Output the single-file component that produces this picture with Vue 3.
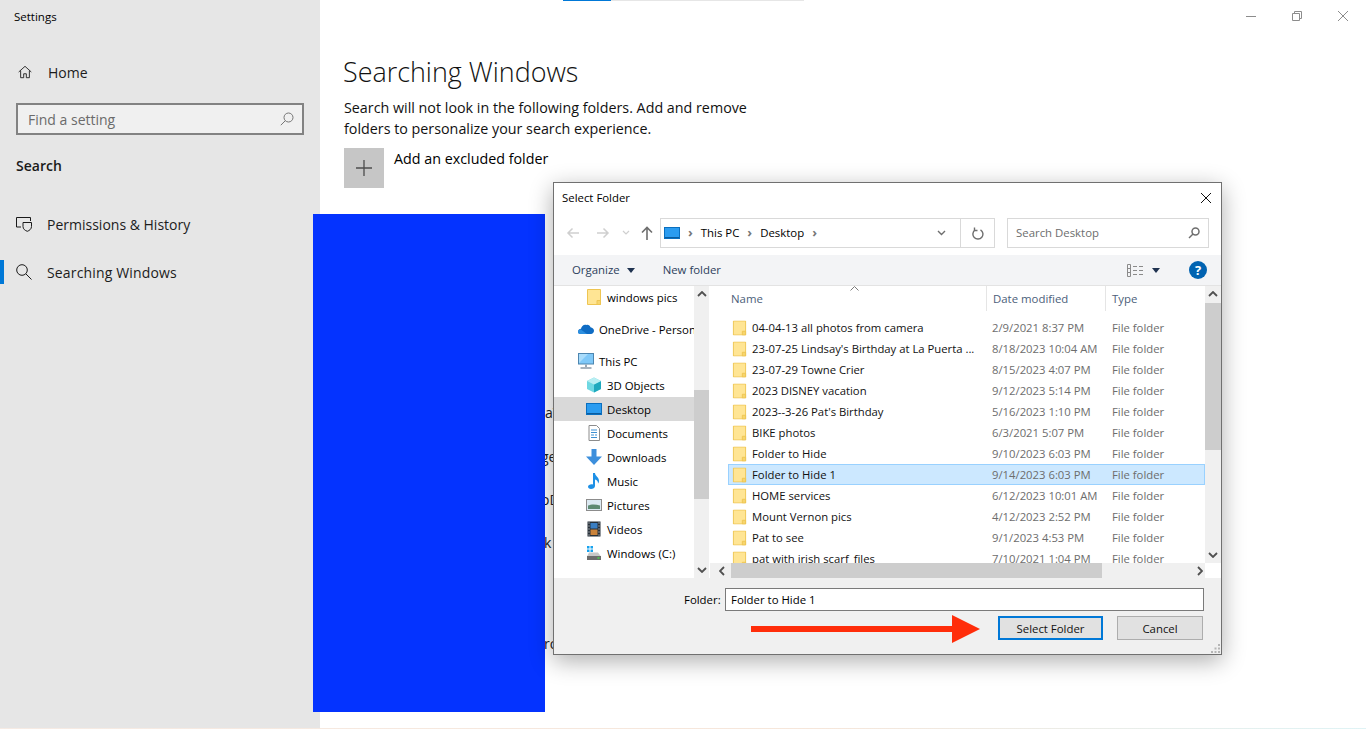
<script setup>
const navItems = [
  { label: 'windows pics', icon: 'folder', indent: true },
  { label: 'OneDrive - Personal', icon: 'cloud', gapTop: 8 },
  { label: 'This PC', icon: 'pc', gapTop: 8 },
  { label: '3D Objects', icon: 'cube', indent: true },
  { label: 'Desktop', icon: 'desktop', indent: true, active: true },
  { label: 'Documents', icon: 'docs', indent: true },
  { label: 'Downloads', icon: 'down', indent: true },
  { label: 'Music', icon: 'music', indent: true },
  { label: 'Pictures', icon: 'pics', indent: true },
  { label: 'Videos', icon: 'video', indent: true },
  { label: 'Windows (C:)', icon: 'drive', indent: true },
]

const files = [
  { name: '04-04-13 all photos from camera', date: '2/9/2021 8:37 PM' },
  { name: "23-07-25 Lindsay's Birthday at La Puerta ...", date: '8/18/2023 10:04 AM' },
  { name: '23-07-29 Towne Crier', date: '8/15/2023 4:07 PM' },
  { name: '2023 DISNEY vacation', date: '9/12/2023 5:14 PM' },
  { name: "2023--3-26 Pat's Birthday", date: '5/16/2023 1:10 PM' },
  { name: 'BIKE photos', date: '6/3/2021 5:07 PM' },
  { name: 'Folder to Hide', date: '9/10/2023 6:03 PM' },
  { name: 'Folder to Hide 1', date: '9/14/2023 6:03 PM', selected: true },
  { name: 'HOME services', date: '6/12/2023 10:01 AM' },
  { name: 'Mount Vernon pics', date: '4/12/2023 2:52 PM' },
  { name: 'Pat to see', date: '9/1/2023 4:53 PM' },
  { name: 'pat with irish scarf_files', date: '7/10/2021 1:04 PM' },
]

// bits of the excluded folder list that stick out between the blue box and the dialog
const hiddenRows = [
  { text: 'a\\', top: 403, left: 545 },
  { text: 'ge', top: 447, left: 541 },
  { text: 'oD', top: 490, left: 541 },
  { text: 'k', top: 533, left: 544 },
  { text: 'ro', top: 634, left: 544 },
]
</script>

<template>
  <div class="screen">
    <svg class="defs" width="0" height="0">
      <symbol id="folder" viewBox="0 0 16 16">
        <path d="M1.500 .5h13v15h-13z" fill="#ffe594" stroke="#eec552" />
        <path d="M11 15.500v-4h3.500v4z" fill="#f6d56e" stroke="#eec552" />
      </symbol>
    </svg>

    <aside class="sidebar">
      <div class="app-title">Settings</div>
      <div class="side-link home">
        <svg class="side-icon" viewBox="0 0 16 16" fill="none" stroke="#1a1a1a"><path d="M.8 8 8 1.500 15.200 8M3 6.500v8h3.500V10h3v4.500H13v-8" /></svg>
        <span>Home</span>
      </div>
      <div class="find">
        <span>Find a setting</span>
        <svg width="14" height="14" viewBox="0 0 14 14" fill="none" stroke="#767676"><circle cx="8.500" cy="5.500" r="4.500" /><path d="M5.300 8.700.8 13.200" /></svg>
      </div>
      <div class="side-head">Search</div>
      <div class="side-link perm">
        <svg class="side-icon wide" viewBox="0 0 16 16" fill="none" stroke="#1a1a1a"><path d="M5 11H.5V1.500h14V5" /><path d="M7 6.500h8.500v4c0 2.500-2 4-4.200 4.800C9 14.500 7 13 7 10.500z" /></svg>
        <span>Permissions &amp; History</span>
      </div>
      <div class="side-link current">
        <svg class="side-icon wide" viewBox="0 0 16 16" fill="none" stroke="#1a1a1a"><circle cx="6" cy="6" r="5.300" /><path d="m9.800 9.800 5.700 5.700" /></svg>
        <span>Searching Windows</span>
      </div>
    </aside>

    <main class="content">
      <div class="loader"><i></i></div>
      <div class="win-controls">
        <svg width="12" height="12" viewBox="0 0 12 12" fill="none" stroke="#8c8c8c"><path d="M1 6.500h10" /></svg>
        <svg width="12" height="12" viewBox="0 0 12 12" fill="none" stroke="#8c8c8c"><path d="M1.500 3.500h7v7h-7zM3.500 3.500v-2h7v7h-2" /></svg>
        <svg width="12" height="12" viewBox="0 0 12 12" fill="none" stroke="#8c8c8c"><path d="m1 1 10 10M11 1 1 11" /></svg>
      </div>
      <h1>Searching Windows</h1>
      <p class="intro">Search will not look in the following folders. Add and remove folders to personalize your search experience.</p>
      <div class="add-row">
        <div class="add-tile">
          <svg width="16" height="16" viewBox="0 0 16 16" stroke="#4d4d4d" stroke-width="1.300"><path d="M8 0v16M0 8h16" /></svg>
        </div>
        <span>Add an excluded folder</span>
      </div>
    </main>

    <div v-for="r in hiddenRows" :key="r.top" class="hidden-row" :style="{ top: r.top + 'px', left: r.left + 'px' }">{{ r.text }}</div>

    <div class="blue-box"></div>

    <section class="dialog">
      <header class="dlg-title">
        <span>Select Folder</span>
        <svg width="12" height="12" viewBox="0 0 12 12" fill="none" stroke="#111"><path d="m1 1 10 10M11 1 1 11" /></svg>
      </header>

      <div class="address-row">
        <div class="nav-btns">
          <svg width="14" height="12" viewBox="0 0 14 12" fill="none" stroke="#cfcfcf" stroke-width="1.500"><path d="M13 6H2M6.500 1.500 2 6l4.500 4.500" /></svg>
          <svg width="14" height="12" viewBox="0 0 14 12" fill="none" stroke="#cfcfcf" stroke-width="1.500"><path d="M1 6h11M7.500 1.500 12 6l-4.500 4.500" /></svg>
          <svg width="8" height="6" viewBox="0 0 8 6" fill="none" stroke="#cfcfcf" stroke-width="1.200"><path d="m1 1 3 3 3-3" /></svg>
          <svg width="12" height="14" viewBox="0 0 12 14" fill="none" stroke="#6e6e6e" stroke-width="1.600"><path d="M6 14V2M1 6.500 6 1.500l5 5" /></svg>
        </div>
        <div class="address">
          <svg width="16" height="12" viewBox="0 0 16 12"><rect x=".5" y=".5" width="15" height="11" fill="#2b9cf0" stroke="#0a6fbf" /><path d="M1 10.500h14" stroke="#0b5c9e" /></svg>
          <b class="crumb-sep">›</b><span>This PC</span><b class="crumb-sep">›</b><span>Desktop</span><b class="crumb-sep">›</b>
          <svg class="addr-drop" width="9" height="6" viewBox="0 0 9 6" fill="none" stroke="#6e6e6e" stroke-width="1.400"><path d="m1 1 3.500 3.500L8 1" /></svg>
          <div class="refresh">
            <svg width="12" height="13" viewBox="0 0 12 13" fill="none" stroke="#6e6e6e" stroke-width="1.400"><path d="M8.500 2.800A5 5 0 1 1 3 3" /><path d="M2.500 .5V3.500h3" /></svg>
          </div>
        </div>
        <div class="search-box">
          <span>Search Desktop</span>
          <svg width="12" height="12" viewBox="0 0 12 12" fill="none" stroke="#6e6e6e" stroke-width="1.500"><circle cx="7.500" cy="4.500" r="3.500" /><path d="M5 7 1 11" /></svg>
        </div>
      </div>

      <div class="toolbar">
        <span class="organize">Organize</span>
        <i class="caret"></i>
        <span class="new-folder">New folder</span>
        <svg class="view-icon" width="17" height="13" viewBox="0 0 17 13" fill="none" stroke="#8a8a8a"><path d="M.5.500h3v12h-3zM.5 4.500h3M.5 8.500h3M6 2.500h4M12 2.500h4M6 6.500h4M12 6.500h4M6 10.500h4M12 10.500h4" /></svg>
        <i class="caret view-caret"></i>
        <span class="help">?</span>
      </div>

      <div class="dlg-body">
        <div class="nav-pane">
          <ul class="nav-list">
            <li
              v-for="n in navItems"
              :key="n.label"
              :class="{ indent: n.indent, active: n.active, spaced: n.gapTop }"
            >
              <svg class="nav-icon" viewBox="0 0 16 16">
                <use v-if="n.icon === 'folder'" href="#folder" />
                <template v-else-if="n.icon === 'cloud'">
                  <path d="M0 11c0-2 1.500-3.200 3-3.200C3.500 5 6 3 8.500 4c1.500-.6 3.500.3 4 2.200 2 .2 3.500 1.800 3.500 3.600 0 2-1.500 3.200-3 3.200H2.500C1 13 0 12.300 0 11z" fill="#0f6cc4" />
                  <path d="M0 11c0-1.500 1-2.500 2.500-2.800L9 13H2.500C1 13 0 12.300 0 11z" fill="#2c8fe0" />
                </template>
                <template v-else-if="n.icon === 'pc'">
                  <rect x=".5" y=".5" width="15" height="10.500" fill="#7fc8f8" stroke="#4d86b0" />
                  <path d="M1 1h9L1 10z" fill="#a9dcfb" />
                  <path d="M8 11.500v2.500" stroke="#9aa8b5" stroke-width="2" />
                  <path d="M2.500 15h11" stroke="#8a9aa8" stroke-width="1.500" />
                </template>
                <template v-else-if="n.icon === 'cube'">
                  <path d="M8 .5 15 4v8l-7 3.500L1 12V4z" fill="#6fd8e2" />
                  <path d="M8 7.500 15 4v8l-7 3.500z" fill="#1fa9bd" />
                  <path d="M8 7.500 1 4l7-3.500L15 4z" fill="#b8eef2" />
                </template>
                <template v-else-if="n.icon === 'desktop'">
                  <rect x=".5" y="2.500" width="15" height="11" fill="#2b9cf0" stroke="#0a6fbf" />
                  <path d="M1 12.500h14" stroke="#0b5c9e" />
                </template>
                <template v-else-if="n.icon === 'docs'">
                  <path d="M3 .5h7.500L13.500 3.500v12H3z" fill="#fff" stroke="#8c8c8c" />
                  <path d="M5 5h6M5 7.500h6M5 10h3M9 10h2M5 12.500h6" stroke="#3d8fd1" />
                </template>
                <template v-else-if="n.icon === 'down'">
                  <path d="M5.500 0h5v7.500H16L8 16 0 7.500h5.500z" fill="#3d8fdc" />
                </template>
                <template v-else-if="n.icon === 'music'">
                  <path d="M7 0h2c0 3 4 4 4 8 0 1-.4 2-1 2.500.2-2-1-3.500-3-4v6.500C9 15 7 16 5 16c-2 0-3-1-3-2.200C2 12 4.500 11 7 11.500z" fill="#1e90e6" />
                </template>
                <template v-else-if="n.icon === 'pics'">
                  <rect x=".5" y="2.500" width="15" height="11" fill="#dbe9f2" stroke="#8c8c8c" />
                  <path d="M2 8.500c3-1.500 8-1.500 12 0V12H2z" fill="#5d8a72" />
                </template>
                <template v-else-if="n.icon === 'video'">
                  <rect x="1.500" y=".5" width="13" height="15" fill="#27313a" />
                  <path d="M4.500 2h7v5.500h-7z" fill="#3a7ec2" />
                  <path d="M4.500 8.500h7V14h-7z" fill="#c9823a" />
                  <path d="M2.500 2h1M2.500 5h1M2.500 8h1M2.500 11h1M2.500 14h1M12.500 2h1M12.500 5h1M12.500 8h1M12.500 11h1M12.500 14h1" stroke="#e8e8e8" />
                </template>
                <template v-else-if="n.icon === 'drive'">
                  <path d="M1 1h2.500v2.500H1zM4.500 1H7v2.500H4.500zM1 4.500h2.500V7H1zM4.500 4.500H7V7H4.500z" fill="#17a2ee" />
                  <path d="M3 7.500h9l3 4H1z" fill="#c8c8c8" />
                  <rect x="1" y="11" width="14" height="4" fill="#6d6d6d" />
                  <path d="M11.500 13h2" stroke="#46d846" stroke-width="1.500" />
                </template>
              </svg>
              <span>{{ n.label }}</span>
            </li>
          </ul>
          <div class="scroll-v nav-scroll">
            <svg width="10" height="6" viewBox="0 0 10 6" fill="none" stroke="#505050" stroke-width="1.800"><path d="m1 5 4-4 4 4" /></svg>
            <div class="thumb-space"><div class="thumb"></div></div>
            <svg width="10" height="6" viewBox="0 0 10 6" fill="none" stroke="#505050" stroke-width="1.800"><path d="m1 1 4 4 4-4" /></svg>
          </div>
        </div>

        <div class="list-pane">
          <div class="list-main">
            <div class="list-area">
              <div class="col-head">
                <span class="c-name">Name
                  <svg class="sort" width="9" height="5" viewBox="0 0 9 5" fill="none" stroke="#7a7a7a"><path d="m.5 4.500 4-4 4 4" /></svg>
                </span>
                <span class="c-date">Date modified</span>
                <span class="c-type">Type</span>
              </div>
              <div class="rows">
                <div v-for="f in files" :key="f.name" class="row" :class="{ selected: f.selected }">
                  <svg class="row-icon" viewBox="0 0 16 16"><use href="#folder" /></svg>
                  <span class="r-name">{{ f.name }}</span>
                  <span class="r-date">{{ f.date }}</span>
                  <span class="r-type">File folder</span>
                </div>
              </div>
            </div>
            <div class="scroll-v list-scroll">
              <svg width="10" height="6" viewBox="0 0 10 6" fill="none" stroke="#505050" stroke-width="1.800"><path d="m1 5 4-4 4 4" /></svg>
              <div class="thumb-space"><div class="thumb"></div></div>
              <svg width="10" height="6" viewBox="0 0 10 6" fill="none" stroke="#505050" stroke-width="1.800"><path d="m1 1 4 4 4-4" /></svg>
            </div>
          </div>
          <div class="scroll-h">
            <svg width="6" height="10" viewBox="0 0 6 10" fill="none" stroke="#505050" stroke-width="1.800"><path d="M5 1 1 5l4 4" /></svg>
            <div class="h-track"><div class="h-thumb"></div></div>
            <svg width="6" height="10" viewBox="0 0 6 10" fill="none" stroke="#505050" stroke-width="1.800"><path d="m1 1 4 4-4 4" /></svg>
            <div class="corner"></div>
          </div>
        </div>
      </div>

      <footer class="dlg-foot">
        <div class="folder-line">
          <label>Folder:</label>
          <div class="folder-input">Folder to Hide 1</div>
        </div>
        <div class="btn-line">
          <button class="primary">Select Folder</button>
          <button class="cancel">Cancel</button>
        </div>
        <svg class="grip" width="9" height="9" viewBox="0 0 9 9" fill="#b5b5b5"><path d="M7 0h2v2H7zM3.500 3.500h2v2h-2zM7 3.500h2v2H7zM0 7h2v2H0zM3.500 7h2v2h-2zM7 7h2v2H7z" /></svg>
      </footer>
    </section>

    <svg class="red-arrow" width="230" height="30" viewBox="0 0 230 30">
      <path d="M0 12h201V1l28 14-28 14V18H0z" fill="#ff2d0a" />
    </svg>

    <div class="edge-line"></div>
  </div>
</template>

<style>
body {
  margin: 0;
  background: #fff;
}
</style>

<style scoped>
.screen {
  position: relative;
  display: flex;
  width: 1366px;
  height: 729px;
  overflow: hidden;
  background: #fff;
  color: #000;
  font-family: "Open Sans", "Noto Sans", sans-serif;
}
.defs {
  position: absolute;
}

/* sidebar */
.sidebar {
  width: 320px;
  flex: none;
  display: flex;
  flex-direction: column;
  background: #e6e6e6;
  font-size: 14px;
}
.app-title {
  padding: 8px 0 0 14px;
  height: 17px;
  font-size: 11.500px;
  line-height: 17px;
}
.side-link {
  position: relative;
  display: flex;
  align-items: center;
  height: 24px;
  padding-left: 18px;
  gap: 16px;
  color: #1c1c1c;
}
.side-icon {
  width: 14px;
  height: 14px;
  flex: none;
}
.side-icon.wide {
  width: 16px;
  height: 16px;
}
.perm,
.current {
  gap: 15px;
}
.home {
  margin-top: 35px;
}
.find {
  display: flex;
  align-items: center;
  justify-content: space-between;
  margin: 19px 16px 0;
  height: 28px;
  padding: 0 8px 0 10px;
  border: 2px solid #828282;
  background: #f0f0f0;
  color: #6b6b6b;
}
.side-head {
  margin: 19px 0 0 16px;
  height: 24px;
  line-height: 24px;
  font-weight: 600;
  color: #1a1a1a;
}
.perm {
  margin-top: 34px;
  padding-left: 16px;
}
.current {
  margin-top: 24px;
  padding-left: 16px;
  letter-spacing: 0.15px;
}
.current::before {
  content: "";
  position: absolute;
  left: 0;
  top: 0;
  width: 4px;
  height: 24px;
  background: #0078d7;
}

/* main page */
.content {
  position: relative;
  flex: 1;
  padding: 52px 0 0 23px;
}
.loader {
  position: absolute;
  left: 243px;
  top: 0;
  width: 241px;
  height: 1px;
  background: #e6e6e6;
}
.loader i {
  display: block;
  width: 48px;
  height: 1px;
  background: #0078d7;
}
.win-controls {
  position: absolute;
  right: 17px;
  top: 10px;
  display: flex;
  gap: 34px;
}
h1 {
  margin: 0;
  font-size: 26.900px;
  font-weight: 300;
  line-height: 40px;
  color: #111;
}
.intro {
  margin: 5px 0 0 1px;
  width: 430px;
  font-size: 14.300px;
  line-height: 21px;
  color: #111;
}
.add-row {
  display: flex;
  gap: 10px;
  margin: 9px 0 0 1px;
  font-size: 14.300px;
  line-height: 20px;
}
.add-row span {
  padding-top: 1px;
}
.add-tile {
  width: 40px;
  height: 40px;
  display: flex;
  align-items: center;
  justify-content: center;
  background: #c6c6c6;
}
.hidden-row {
  position: absolute;
  white-space: nowrap;
  font-size: 14px;
  line-height: 20px;
  color: #222;
}
.blue-box {
  position: absolute;
  left: 313px;
  top: 214px;
  width: 232px;
  height: 498px;
  background: #0433ff;
}
.edge-line {
  position: absolute;
  left: 0;
  right: 0;
  bottom: 0;
  height: 1px;
  background: linear-gradient(90deg, #f6ebe4, #f6e6da 60%, #dff3f5);
}

/* dialog */
.dialog {
  position: absolute;
  left: 553px;
  top: 182px;
  width: 667px;
  height: 471px;
  display: flex;
  flex-direction: column;
  border: 1px solid #707070;
  background: #fff;
  box-shadow: 0 6px 22px rgba(0, 0, 0, 0.32);
  font-size: 11.400px;
}
.dlg-title {
  height: 29px;
  flex: none;
  display: flex;
  align-items: center;
  justify-content: space-between;
  padding: 0 9px 0 8px;
}
.address-row {
  display: flex;
  margin-top: 6px;
  height: 30px;
  flex: none;
}
.nav-btns {
  width: 106px;
  flex: none;
  display: flex;
  align-items: center;
  padding-left: 12px;
  box-sizing: border-box;
}
.nav-btns svg:nth-child(1) {
  margin-right: 16px;
}
.nav-btns svg:nth-child(2) {
  margin-right: 12px;
}
.nav-btns svg:nth-child(3) {
  margin-right: 11px;
}
.address {
  width: 335px;
  box-sizing: border-box;
  flex: none;
  display: flex;
  align-items: center;
  border: 1px solid #d9d9d9;
  padding-left: 3px;
}
.address span,
.search-box span {
  margin-bottom: 2px;
}
.crumb-sep {
  margin: 0 8px 2px 8px;
  color: #777;
  font-size: 13px;
  font-weight: 700;
  line-height: 1;
}
.addr-drop {
  margin-left: auto;
  margin-right: 14px;
}
.refresh {
  width: 33px;
  height: 100%;
  display: flex;
  align-items: center;
  justify-content: center;
  border-left: 1px solid #d9d9d9;
}
.search-box {
  margin-left: 12px;
  width: 202px;
  box-sizing: border-box;
  display: flex;
  align-items: center;
  justify-content: space-between;
  padding: 0 8px;
  border: 1px solid #d9d9d9;
  color: #6d6d6d;
}
.toolbar {
  display: flex;
  align-items: center;
  margin-top: 7px;
  height: 31px;
  flex: none;
  padding-left: 18px;
  background: #f3f4f6;
  border-bottom: 1px solid #e3e3e3;
  box-sizing: border-box;
  color: #2d3f5c;
}
.organize,
.new-folder {
  margin-bottom: 2px;
}
.caret {
  width: 0;
  height: 0;
  margin-left: 7px;
  border-left: 4.500px solid transparent;
  border-right: 4.500px solid transparent;
  border-top: 5px solid #1f3250;
}
.new-folder {
  margin-left: 28px;
}
.view-icon {
  margin-left: auto;
}
.view-caret {
  margin-left: 8px;
}
.help {
  margin: 0 14px 0 29px;
  width: 18px;
  height: 18px;
  border-radius: 50%;
  background: #0063b1;
  color: #fff;
  font-size: 13px;
  font-weight: 700;
  line-height: 18px;
  text-align: center;
}

.dlg-body {
  display: flex;
  height: 292px;
  flex: none;
}
.nav-pane {
  width: 156px;
  flex: none;
  display: flex;
  overflow: hidden;
}
.nav-list {
  list-style: none;
  margin: -1px 0 0;
  padding: 0;
  width: 140px;
  flex: none;
}
.nav-list li {
  display: flex;
  align-items: center;
  gap: 5px;
  height: 24px;
  padding-left: 24px;
  white-space: nowrap;
  overflow: hidden;
}
.nav-list li.indent {
  padding-left: 32px;
}
.nav-list li.spaced {
  margin-top: 8px;
}
.nav-list li.active {
  background: #d9d9d9;
}
.nav-icon {
  width: 16px;
  height: 16px;
  flex: none;
}
.scroll-v {
  width: 15px;
  flex: none;
  display: flex;
  flex-direction: column;
  align-items: center;
  justify-content: space-between;
  padding: 5px 0;
  box-sizing: border-box;
  background: #f0f0f0;
}
.thumb-space {
  flex: 1;
  width: 100%;
  position: relative;
}
.thumb {
  position: absolute;
  left: 0;
  right: 0;
  background: #cdcdcd;
}
.nav-scroll .thumb {
  top: 93px;
  height: 109px;
}
.list-pane {
  flex: 1;
  min-width: 0;
  display: flex;
  flex-direction: column;
}
.list-main {
  flex: 1;
  min-height: 0;
  display: flex;
}
.list-area {
  flex: 1;
  min-width: 0;
  overflow: hidden;
}
.list-scroll .thumb {
  top: 6px;
  height: 147px;
}
.list-scroll {
  width: 16px;
}
.col-head {
  display: flex;
  height: 25px;
  color: #4c607a;
  align-items: center;
}
.col-head span {
  position: relative;
  height: 100%;
  display: flex;
  align-items: center;
  box-sizing: border-box;
}
.c-name {
  width: 276px;
  padding-left: 21px;
}
.sort {
  position: absolute;
  left: 140px;
  top: 0;
}
.c-date {
  width: 119px;
  padding-left: 6px;
  border-left: 1px solid #e5e5e5;
}
.c-type {
  flex: 1;
  padding-left: 6px;
  border-left: 1px solid #e5e5e5;
}
.rows {
  padding: 6px 0 0 18px;
  font-size: 11.300px;
}
.row {
  display: flex;
  align-items: center;
  height: 21px;
  box-sizing: border-box;
  border: 1px solid transparent;
  white-space: nowrap;
}
.row.selected {
  background: #cce8ff;
  border-color: #99d1ff;
}
.row-icon {
  width: 15px;
  height: 16px;
  flex: none;
  margin-left: 3px;
}
.r-name {
  width: 240px;
  margin-left: 5px;
  color: #111;
}
.r-date {
  width: 120px;
  color: #6d6d6d;
}
.r-type {
  color: #6d6d6d;
}
.scroll-h {
  display: flex;
  align-items: center;
  height: 15px;
  flex: none;
  background: #f0f0f0;
  padding-left: 9px;
}
.h-track {
  width: 461px;
  height: 100%;
  margin: 0 5px 0 6px;
}
.h-thumb {
  width: 371px;
  height: 100%;
  background: #cdcdcd;
}
.corner {
  width: 16px;
  height: 100%;
  margin-left: auto;
  background: #fff;
}

.dlg-foot {
  position: relative;
  flex: 1;
  background: #f0f0f0;
}
.folder-line {
  display: flex;
  align-items: center;
  margin: 10px 17px 0 130px;
}
.folder-line label {
  width: 41px;
  flex: none;
}
.folder-input {
  flex: 1;
  height: 23px;
  box-sizing: border-box;
  padding-left: 5px;
  line-height: 21px;
  border: 1px solid #7a7a7a;
  background: #fff;
}
.btn-line {
  display: flex;
  justify-content: flex-end;
  gap: 14px;
  margin: 5px 18px 0 0;
}
button {
  box-sizing: border-box;
  height: 24px;
  padding: 0;
  font: inherit;
  color: #111;
  background: #e1e1e1;
  border: 1px solid #adadad;
}
.primary {
  width: 105px;
  border: 2px solid #0078d7;
}
.cancel {
  width: 86px;
}
.grip {
  position: absolute;
  right: 1px;
  bottom: 1px;
}
.red-arrow {
  position: absolute;
  left: 751px;
  top: 614px;
}
</style>
